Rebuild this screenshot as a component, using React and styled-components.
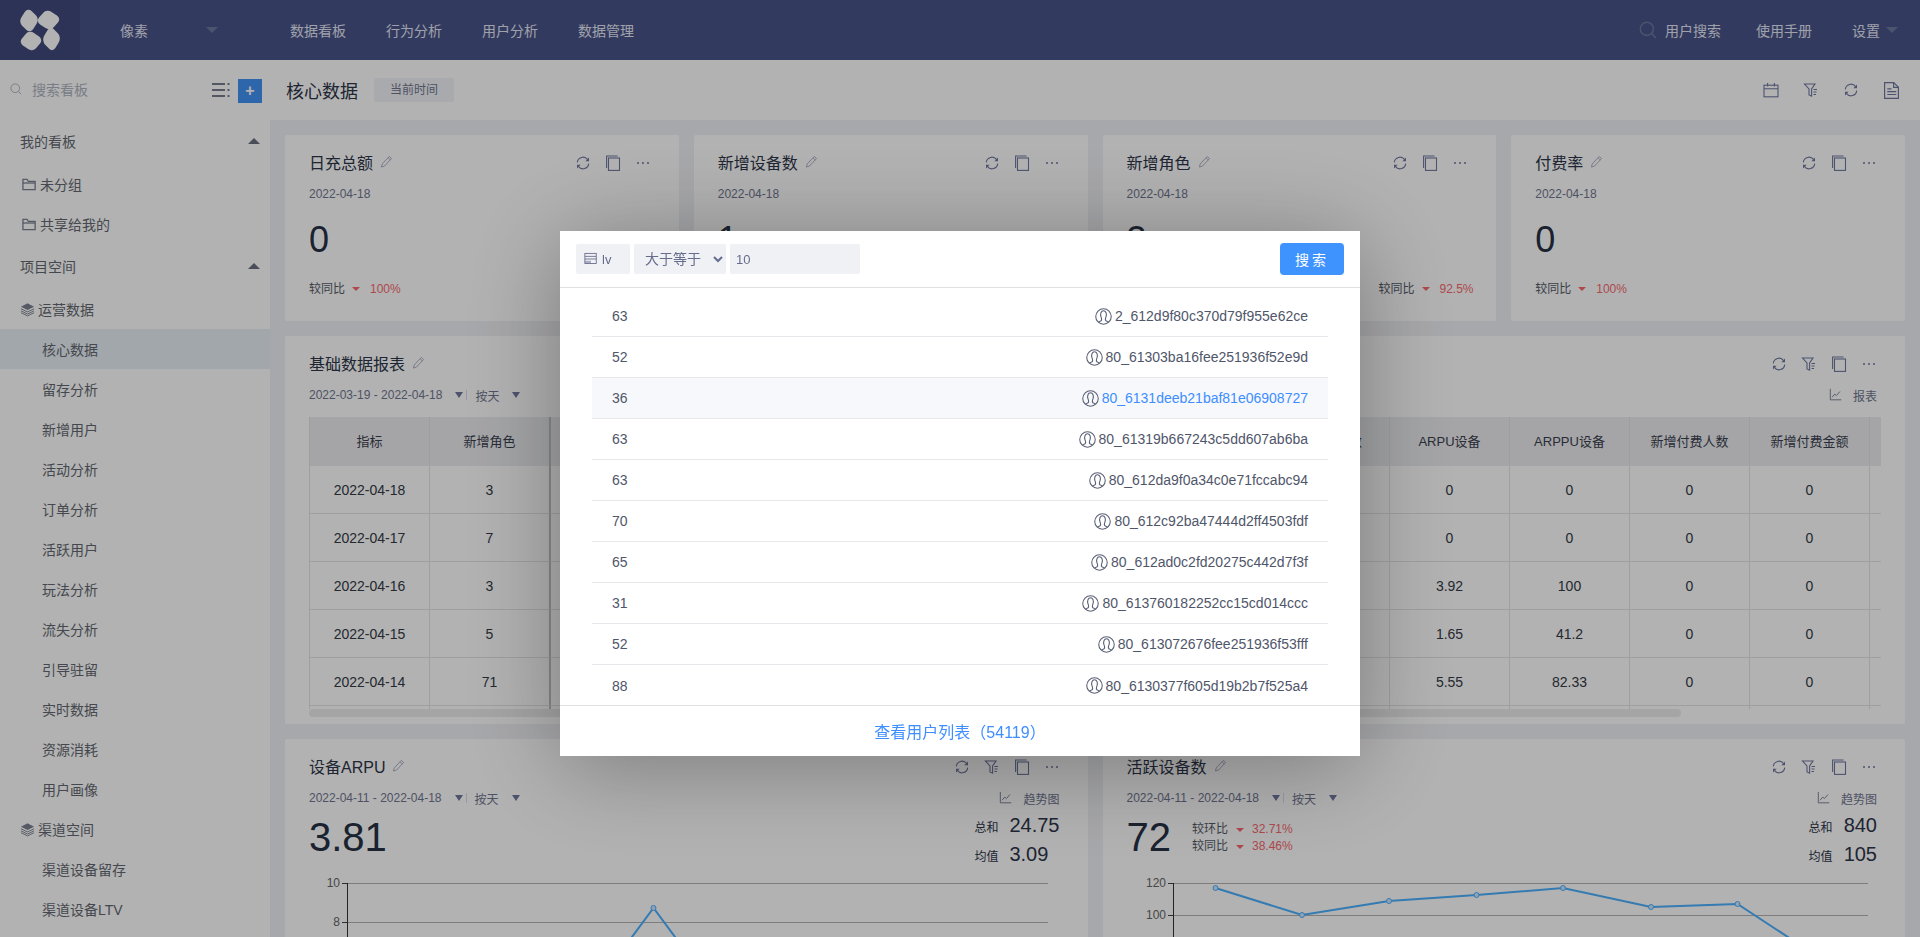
import React from 'react'
import styled, { createGlobalStyle } from 'styled-components'

const GlobalStyle = createGlobalStyle`
  * { box-sizing: border-box; }
  html, body { margin: 0; padding: 0; height: 100%; overflow: hidden; }
  body {
    font-family: "Liberation Sans", "Noto Sans CJK SC", sans-serif;
    font-size: 14px;
    color: #2d3549;
    background: #f0f1f5;
  }
`

const ICON = '#6f789f'

const Svg = ({ size = 16, children, ...rest }) => (
  <svg width={size} height={size} viewBox="0 0 16 16" fill="none" stroke="currentColor" strokeWidth="1.1" {...rest}>
    {children}
  </svg>
)
const IconRefresh = () => (
  <Svg>
    <path d="M2.3 7.4A5.7 5.7 0 0 1 12.6 4.6" />
    <path d="M13.7 8.6A5.7 5.7 0 0 1 3.4 11.4" />
    <path d="M14 2.6v3.600h-3.600z" fill="currentColor" stroke="none" />
    <path d="M2 13.400V9.800h3.600z" fill="currentColor" stroke="none" />
  </Svg>
)
const IconCopy = () => (
  <Svg>
    <rect x="3.500" y="3" width="11" height="12.400" />
    <path d="M1.600 13V1h11" />
  </Svg>
)
const IconDots = () => (
  <Svg>
    <circle cx="3" cy="8" r="1" fill="currentColor" stroke="none" />
    <circle cx="8" cy="8" r="1" fill="currentColor" stroke="none" />
    <circle cx="13" cy="8" r="1" fill="currentColor" stroke="none" />
  </Svg>
)
const IconFilter = () => (
  <Svg>
    <path d="M1.500 2h10.500L8.600 7v7.200L6 13V7z" />
    <path d="M10.500 7.500h3.500M10.500 10h3M10.500 12.500h2.500" />
  </Svg>
)
const IconCalendar = () => (
  <Svg>
    <rect x="1" y="3.200" width="14" height="11.600" />
    <path d="M1 6.800h14M4.600 1v3.600M11.400 1v3.600" />
  </Svg>
)
const IconDoc = () => (
  <Svg size={17}>
    <path d="M1.500.6h8.600l4.400 4.400v10.400h-13z" />
    <path d="M4 6.400h4M4 9h8.500M4 11.800h8.500M10 .6v4.400h4.500" />
  </Svg>
)
const IconPencil = () => (
  <Svg size={14} strokeWidth="1">
    <path d="M10.600 1.600l2.600 2.400-8 8.600-3.600 1.200 1-3.600z" />
    <path d="M9.200 3.200l2.600 2.400" />
  </Svg>
)
const IconChart = () => (
  <Svg size={14} strokeWidth="1">
    <path d="M1.500 1v12.500H14" />
    <path d="M3.500 10.500l3-3.500 2 1.600 4-4.600" />
  </Svg>
)
const IconFolder = () => (
  <Svg size={15} strokeWidth="1.400">
    <path d="M1 13.500V2.600h4.400l1.400 2H14v8.900z" />
    <path d="M1 6.400h13" />
  </Svg>
)
const IconLayers = () => (
  <Svg size={15} strokeWidth="1">
    <path d="M8 1.400L15 5 8 8.600 1 5z" fill="currentColor" stroke="none" />
    <path d="M1 7.200L8 10.600l7-3.400M1 9.400L8 12.800l7-3.400M1 11.400L8 14.800l7-3.400" />
  </Svg>
)
const IconUser = () => (
  <Svg size={17} strokeWidth="1" style={{ flexShrink: 0 }}>
    <circle cx="8" cy="8" r="7.300" />
    <path d="M5.800 12c.9-.9.500-2.200-.2-3.900C4.800 5.700 5.600 2.600 8 2.600s3.200 3.100 2.400 5.500c-.7 1.700-1.100 3-.2 3.900" />
    <path d="M3 13.300l2.800-1.300M13 13.300L10.200 12" />
  </Svg>
)
const IconSearch = ({ size = 16 }) => (
  <Svg size={size} strokeWidth="1.300">
    <circle cx="7" cy="7" r="5.800" />
    <path d="M11.200 11.200l3.800 3.800" />
  </Svg>
)
const IconField = () => (
  <Svg size={14} strokeWidth="1">
    <rect x="1" y="1.600" width="13" height="11.600" />
    <path d="M1 5h13M1 8h13" />
    <path d="M1 10h7v3.200H1z" fill="currentColor" stroke="none" opacity="0.5" />
  </Svg>
)
const IconMenu = () => (
  <svg width="18" height="14" viewBox="0 0 18 14" fill="currentColor">
    <rect x="0" y="0" width="13" height="2" />
    <rect x="0" y="6" width="13" height="2" />
    <rect x="0" y="12" width="13" height="2" />
    <rect x="15.500" y="0" width="2" height="2" />
    <rect x="15.500" y="6" width="2" height="2" />
    <rect x="15.500" y="12" width="2" height="2" />
  </svg>
)
const logoPetals = [
  'translate(10 11.500) scale(.8 .98) rotate(38)',
  'translate(29.500 11) scale(.98 .84) rotate(38)',
  'translate(12 32) scale(.94 .84) rotate(38)',
  'translate(32.500 30) scale(.76 1.02) rotate(38)',
]
const Logo = () => (
  <svg width="42" height="42" viewBox="0 0 42 42" fill="#fff">
    {logoPetals.map(t => <rect key={t} x="-9.500" y="-9.500" width="19" height="19" rx="6" transform={t} />)}
  </svg>
)

const Page = styled.div`
  height: 100vh;
  display: flex;
  flex-direction: column;
  overflow: hidden;
`
const TopBar = styled.header`
  height: 60px;
  flex-shrink: 0;
  display: flex;
  align-items: center;
  background: #495388;
  color: #e4e7f5;
  padding-right: 22px;
`
const LogoBlock = styled.div`
  width: 80px;
  height: 60px;
  background: #404a7c;
  display: flex;
  align-items: center;
  justify-content: center;
`
const Project = styled.div`
  width: 170px;
  margin-left: 40px;
  display: flex;
  align-items: center;
`
const NavList = styled.nav`
  display: flex;
  gap: 40px;
`
const TopRight = styled.div`
  margin-left: auto;
  display: flex;
  align-items: center;
`
const TopSearch = styled.div`
  display: flex;
  align-items: center;
  gap: 8px;
  margin-right: 35px;
  svg { color: #6e78a0; }
`
const TopLink = styled.span`
  margin-right: ${p => p.$gap || 0}px;
`
const Caret = styled.i`
  display: inline-block;
  width: 0;
  height: 0;
  flex-shrink: 0;
  margin-left: ${p => p.$left || 0}px;
  margin-right: ${p => p.$right || 0}px;
  border-left: ${p => p.$size}px solid transparent;
  border-right: ${p => p.$size}px solid transparent;
  ${p => p.$up
    ? `border-bottom: ${p.$height}px solid ${p.$color};`
    : `border-top: ${p.$height}px solid ${p.$color};`}
`
const Body = styled.div`
  flex: 1;
  min-height: 0;
  display: flex;
`
const Sidebar = styled.aside`
  width: 270px;
  flex-shrink: 0;
  background: #fff;
  overflow: hidden;
  color: #636870;
`
const SideSearch = styled.div`
  height: 59px;
  display: flex;
  align-items: center;
  padding: 0 8px 2px 10px;
  color: #aeb3c0;
`
const SideSearchText = styled.span`
  margin-left: 10px;
  flex: 1;
`
const MenuBtn = styled.span`
  display: flex;
  color: #777d8f;
  margin: 2px 8px 0 0;
`
const PlusBtn = styled.button`
  width: 24px;
  height: 24px;
  margin-top: 4px;
  border: 0;
  padding: 0;
  background: #4392f5;
  color: #fff;
  font: bold 16px/24px "Liberation Sans", sans-serif;
`
const SideSection = styled.div`
  height: 40px;
  margin-top: 2px;
  padding: 0 10px 0 20px;
  display: flex;
  align-items: center;
  justify-content: space-between;
`
const SideGroup = styled.div`
  padding-top: 3px;
`
const SideRow = styled.div`
  height: 40px;
  padding-left: ${p => p.$indent}px;
  display: flex;
  align-items: center;
  gap: 3px;
  background: ${p => (p.$active ? '#e9f0f6' : 'transparent')};
  svg { color: #7c8290; }
`
const Main = styled.main`
  flex: 1;
  min-width: 0;
  display: flex;
  flex-direction: column;
`
const Toolbar = styled.div`
  height: 60px;
  flex-shrink: 0;
  background: #fff;
  display: flex;
  align-items: center;
  padding: 0 20px 0 16px;
`
const PageTitle = styled.h1`
  margin: 0;
  font-size: 18px;
  font-weight: 400;
  color: #2d3549;
`
const TimeTag = styled.span`
  width: 80px;
  height: 24px;
  margin-left: 16px;
  background: #f3f4f8;
  border-radius: 2px;
  font-size: 12px;
  line-height: 24px;
  text-align: center;
  color: #6f7690;
`
const ToolIcons = styled.div`
  margin-left: auto;
  display: flex;
  align-items: center;
  gap: 24px;
  color: ${ICON};
`
const Content = styled.div`
  flex: 1;
  min-height: 0;
  overflow: hidden;
  padding: 15px;
  display: flex;
  flex-direction: column;
  gap: 15px;
`
const Grid = styled.div`
  display: grid;
  grid-template-columns: repeat(${p => p.$cols}, minmax(0, 1fr));
  gap: 15px;
  flex-shrink: 0;
`
const Card = styled.section`
  background: #fff;
  border-radius: 2px;
  padding: 16px 24px 0;
  flex-shrink: 0;
  height: ${p => p.$h}px;
`
const CardHead = styled.div`
  height: 24px;
  display: flex;
  align-items: center;
  justify-content: space-between;
`
const CardTitle = styled.div`
  display: flex;
  align-items: center;
  gap: 7px;
  padding-bottom: 3px;
  font-size: 16px;
  color: #2d3549;
  svg { color: #a3a6bd; }
`
const CardIcons = styled.div`
  display: flex;
  gap: 14px;
  margin-right: 4px;
  color: ${ICON};
`
const DateText = styled.div`
  margin-top: 11px;
  font-size: 12px;
  line-height: 16px;
  color: #6f7690;
`
const BigValue = styled.div`
  margin-top: 16px;
  font-size: 36px;
  line-height: 44px;
  color: #263044;
`
const Compare = styled.div`
  margin-top: 19px;
  padding-left: ${p => p.$indent || 0}px;
  display: flex;
  align-items: center;
  white-space: nowrap;
  font-size: 12px;
  line-height: 16px;
  color: #555b68;
`
const Percent = styled.span`
  color: #f8696f;
`
const RangeRow = styled.div`
  margin-top: 11px;
  height: 16px;
  display: flex;
  align-items: center;
  justify-content: space-between;
  font-size: 12px;
  color: #6f7690;
`
const RangeLeft = styled.div`
  display: flex;
  align-items: center;
`
const RangeSep = styled.i`
  width: 1px;
  height: 10px;
  background: #dcdde4;
  margin: 0 8px 0 3px;
`
const ChartLink = styled.div`
  display: flex;
  align-items: center;
  gap: 10px;
  margin-right: 4px;
  color: #6f7690;
`
const TableBox = styled.div`
  margin-top: 14px;
  height: 292px;
  overflow: hidden;
`
const Table = styled.table`
  table-layout: fixed;
  width: 1680px;
  border-collapse: separate;
  border-spacing: 0;
`
const Th = styled.th`
  width: 120px;
  height: 49px;
  padding: 0 0 2px;
  font-size: 13px;
  font-weight: 400;
  color: #3a404e;
  background: #ecedf0;
  border-left: ${p => (p.$edge ? '2px solid #c4c4c4' : '1px solid #e2e3e7')};
`
const Td = styled.td`
  height: 48px;
  padding: 0;
  text-align: center;
  font-size: 14px;
  color: #343a46;
  border-left: ${p => (p.$edge ? '2px solid #c4c4c4' : '1px solid #e4e4e4')};
  border-bottom: 1px solid #e4e4e4;
`
const ScrollThumb = styled.div`
  width: 1372px;
  height: 8px;
  border-radius: 4px;
  background: #ececec;
`
const StatsRow = styled.div`
  margin-top: 6px;
  height: 53px;
  display: flex;
  justify-content: space-between;
  margin-right: 4px;
`
const StatsLeft = styled.div`
  display: flex;
  align-items: center;
  height: 50px;
  gap: 21px;
`
const TrendValue = styled.div`
  font-size: 40px;
  line-height: 50px;
  color: #263044;
`
const TrendCompare = styled.div`
  display: grid;
  grid-template-columns: auto auto auto;
  align-items: center;
  margin-top: 2px;
  font-size: 12px;
  line-height: 17px;
  color: #555b68;
`
const Summary = styled.div`
  display: grid;
  grid-template-columns: auto auto;
  column-gap: 11px;
  align-items: baseline;
  align-content: start;
  justify-content: end;
  font-size: 20px;
  line-height: 26px;
  color: #2d3549;
`
const SummaryLabel = styled.span`
  font-size: 12px;
`
const ChartSvg = styled.svg`
  display: block;
  margin-top: 10px;
  overflow: hidden;
`
const Overlay = styled.div`
  position: fixed;
  inset: 0;
  background: rgba(0, 0, 0, 0.3);
  display: flex;
  justify-content: center;
  align-items: flex-start;
  padding-top: 231px;
`
const Modal = styled.div`
  width: 800px;
  height: 525px;
  background: #fff;
  display: flex;
  flex-direction: column;
  box-shadow: 0 10px 90px rgba(0, 0, 0, 0.32);
`
const ModalHead = styled.div`
  height: 57px;
  flex-shrink: 0;
  padding: 13px 16px 0;
  display: flex;
  align-items: flex-start;
  gap: 4px;
  border-bottom: 1px solid #e0e0e3;
`
const FieldTag = styled.div`
  width: 54px;
  height: 30px;
  background: #f0f1f5;
  border-radius: 2px;
  padding-left: 8px;
  display: flex;
  align-items: center;
  gap: 4px;
  font-size: 13px;
  color: #666d8c;
`
const OpSelect = styled.select`
  width: 92px;
  height: 30px;
  border: 0;
  border-radius: 2px;
  background: #f0f1f5;
  padding-left: 7px;
  font: 14px "Liberation Sans", "Noto Sans CJK SC", sans-serif;
  color: #666d8c;
  outline: none;
`
const ValueInput = styled.input`
  width: 130px;
  height: 30px;
  border: 0;
  border-radius: 2px;
  background: #f0f1f5;
  padding: 0 6px;
  font: 13px "Liberation Sans", sans-serif;
  color: #666d8c;
  outline: none;
`
const SearchBtn = styled.button`
  width: 64px;
  height: 32px;
  margin: -1px 0 0 auto;
  border: 0;
  border-radius: 4px;
  background: #3e93ff;
  color: #fff;
  font: 14px "Liberation Sans", "Noto Sans CJK SC", sans-serif;
  letter-spacing: 3px;
`
const UserList = styled.div`
  flex: 1;
  min-height: 0;
  padding: 8px 32px 0;
  overflow: hidden;
`
const UserRow = styled.div`
  height: 41px;
  padding: 0 20px;
  display: flex;
  align-items: center;
  justify-content: space-between;
  font-size: 14px;
  color: #50566a;
  background: ${p => (p.$hover ? '#f7f8fb' : '#fff')};
  border-bottom: ${p => (p.$last ? '0' : '1px solid #e8e8ec')};
`
const UserId = styled.div`
  display: flex;
  align-items: center;
  gap: 3px;
  svg { color: #5a6076; }
  span { color: ${p => (p.$hover ? '#3e8eff' : '#50566a')}; }
`
const ModalFoot = styled.div`
  height: 51px;
  flex-shrink: 0;
  border-top: 1px solid #e0e0e3;
  display: flex;
  align-items: center;
  justify-content: center;
  font-size: 16px;
  color: #3e8eff;
`

const kanban = ['核心数据', '留存分析', '新增用户', '活动分析', '订单分析', '活跃用户', '玩法分析', '流失分析', '引导驻留', '实时数据', '资源消耗', '用户画像']
const statCards = [
  { title: '日充总额', value: '0', percent: '100%' },
  { title: '新增设备数', value: '1', percent: '' },
  { title: '新增角色', value: '3', percent: '92.5%', indent: 252 },
  { title: '付费率', value: '0', percent: '100%' },
]
const columns = ['指标', '新增角色', '', '', '', '', '', '', '付费设备数', 'ARPU设备', 'ARPPU设备', '新增付费人数', '新增付费金额', '']
const tableRows = [
  ['2022-04-18', '3', 0, 0, 0, 0],
  ['2022-04-17', '7', 0, 0, 0, 0],
  ['2022-04-16', '3', '3.92', 100, 0, 0],
  ['2022-04-15', '5', '1.65', '41.2', 0, 0],
  ['2022-04-14', '71', '5.55', '82.33', 0, 0],
  ['', '', '', '', '', ''],
]
const users = [
  ['63', '2_612d9f80c370d79f955e62ce'],
  ['52', '80_61303ba16fee251936f52e9d'],
  ['36', '80_6131deeb21baf81e06908727'],
  ['63', '80_61319b667243c5dd607ab6ba'],
  ['63', '80_612da9f0a34c0e71fccabc94'],
  ['70', '80_612c92ba47444d2ff4503fdf'],
  ['65', '80_612ad0c2fd20275c442d7f3f'],
  ['31', '80_613760182252cc15cd014ccc'],
  ['52', '80_613072676fee251936f53fff'],
  ['88', '80_6130377f605d19b2b7f525a4'],
]

function TrendChart({ axisX, gridEnd, ticks, points }) {
  const line = points.map(p => p.join(',')).join(' ')
  return (
    <ChartSvg width="755" height="200" viewBox="0 0 755 200">
      {ticks.map(t => (
        <g key={t.label}>
          <line x1={axisX} y1={t.y + 0.5} x2={gridEnd} y2={t.y + 0.5} stroke="#b4b4b4" />
          <line x1={axisX - 5} y1={t.y + 0.5} x2={axisX} y2={t.y + 0.5} stroke="#444" />
          <text x={axisX - 7} y={t.y + 4} textAnchor="end" fontSize="12" fill="#666">{t.label}</text>
        </g>
      ))}
      <line x1={axisX + 0.5} y1={ticks[0].y} x2={axisX + 0.5} y2="200" stroke="#333" />
      <polyline points={line} fill="none" stroke="#4bb0ff" strokeWidth="2" />
      {points.map(p => (
        <circle key={p[0]} cx={p[0]} cy={p[1]} r="2.500" fill="#cfe8ff" stroke="#4bb0ff" />
      ))}
    </ChartSvg>
  )
}

function Actions({ filter }) {
  return (
    <CardIcons>
      <IconRefresh />
      {filter && <IconFilter />}
      <IconCopy />
      <IconDots />
    </CardIcons>
  )
}

function Range({ text, link }) {
  return (
    <RangeRow>
      <RangeLeft>
        {text}
        <Caret $size={4} $height={6} $color={ICON} $left={13} />
        <RangeSep />
        按天
        <Caret $size={4} $height={6} $color={ICON} $left={13} />
      </RangeLeft>
      <ChartLink><IconChart />{link}</ChartLink>
    </RangeRow>
  )
}

export default function App() {
  return (
    <>
      <GlobalStyle />
      <Page>
        <TopBar>
          <LogoBlock><Logo /></LogoBlock>
          <Project>
            像素
            <Caret $size={6} $height={6} $color="#6e78a0" $left={58} />
          </Project>
          <NavList>
            <span>数据看板</span>
            <span>行为分析</span>
            <span>用户分析</span>
            <span>数据管理</span>
          </NavList>
          <TopRight>
            <TopSearch><IconSearch size={18} />用户搜索</TopSearch>
            <TopLink $gap={40}>使用手册</TopLink>
            <TopLink>设置</TopLink>
            <Caret $size={6} $height={6} $color="#6e78a0" $left={6} />
          </TopRight>
        </TopBar>
        <Body>
          <Sidebar>
            <SideSearch>
              <IconSearch size={12} />
              <SideSearchText>搜索看板</SideSearchText>
              <MenuBtn><IconMenu /></MenuBtn>
              <PlusBtn>+</PlusBtn>
            </SideSearch>
            <SideSection>我的看板<Caret $up $size={6} $height={6} $color="#6b7080" /></SideSection>
            <SideGroup>
              <SideRow $indent={22}><IconFolder />未分组</SideRow>
              <SideRow $indent={22}><IconFolder />共享给我的</SideRow>
            </SideGroup>
            <SideSection>项目空间<Caret $up $size={6} $height={6} $color="#6b7080" /></SideSection>
            <SideGroup>
              <SideRow $indent={20}><IconLayers />运营数据</SideRow>
            </SideGroup>
            {kanban.map((name, i) => (
              <SideRow key={name} $indent={42} $active={i === 0}>{name}</SideRow>
            ))}
            <SideRow $indent={20}><IconLayers />渠道空间</SideRow>
            <SideRow $indent={42}>渠道设备留存</SideRow>
            <SideRow $indent={42}>渠道设备LTV</SideRow>
          </Sidebar>
          <Main>
            <Toolbar>
              <PageTitle>核心数据</PageTitle>
              <TimeTag>当前时间</TimeTag>
              <ToolIcons>
                <IconCalendar />
                <IconFilter />
                <IconRefresh />
                <IconDoc />
              </ToolIcons>
            </Toolbar>
            <Content>
              <Grid $cols={4}>
                {statCards.map(c => (
                  <Card key={c.title} $h={186}>
                    <CardHead>
                      <CardTitle>{c.title}<IconPencil /></CardTitle>
                      <Actions />
                    </CardHead>
                    <DateText>2022-04-18</DateText>
                    <BigValue>{c.value}</BigValue>
                    {c.percent && (
                      <Compare $indent={c.indent}>
                        较同比
                        <Caret $size={4} $height={4} $color="#f8696f" $left={7} $right={10} />
                        <Percent>{c.percent}</Percent>
                      </Compare>
                    )}
                  </Card>
                ))}
              </Grid>
              <Card $h={388}>
                <CardHead>
                  <CardTitle>基础数据报表<IconPencil /></CardTitle>
                  <Actions filter />
                </CardHead>
                <Range text="2022-03-19 - 2022-04-18" link="报表" />
                <TableBox>
                  <Table>
                    <thead>
                      <tr>
                        {columns.map((c, i) => <Th key={i} $edge={i === 2}>{c}</Th>)}
                      </tr>
                    </thead>
                    <tbody>
                      {tableRows.map((r, ri) => (
                        <tr key={ri}>
                          {columns.map((c, i) => {
                            let val = ''
                            if (i < 2) val = r[i]
                            if (i >= 9 && i <= 12) val = r[i - 7]
                            return <Td key={i} $edge={i === 2}>{val}</Td>
                          })}
                        </tr>
                      ))}
                    </tbody>
                  </Table>
                </TableBox>
                <ScrollThumb />
              </Card>
              <Grid $cols={2}>
                <Card $h={500}>
                  <CardHead>
                    <CardTitle>设备ARPU<IconPencil /></CardTitle>
                    <Actions filter />
                  </CardHead>
                  <Range text="2022-04-11 - 2022-04-18" link="趋势图" />
                  <StatsRow>
                    <StatsLeft><TrendValue>3.81</TrendValue></StatsLeft>
                    <Summary>
                      <SummaryLabel>总和</SummaryLabel><span>24.75</span>
                      <SummaryLabel>均值</SummaryLabel><span>3.09</span>
                    </Summary>
                  </StatsRow>
                  <TrendChart
                    axisX={38}
                    gridEnd={739}
                    ticks={[{ label: '10', y: 8 }, { label: '8', y: 47 }]}
                    points={[[257.5, 150], [344.5, 33], [431.5, 150]]}
                  />
                </Card>
                <Card $h={500}>
                  <CardHead>
                    <CardTitle>活跃设备数<IconPencil /></CardTitle>
                    <Actions filter />
                  </CardHead>
                  <Range text="2022-04-11 - 2022-04-18" link="趋势图" />
                  <StatsRow>
                    <StatsLeft>
                      <TrendValue>72</TrendValue>
                      <TrendCompare>
                        <span>较环比</span>
                        <Caret $size={4} $height={4} $color="#f8696f" $left={8} $right={8} />
                        <Percent>32.71%</Percent>
                        <span>较同比</span>
                        <Caret $size={4} $height={4} $color="#f8696f" $left={8} $right={8} />
                        <Percent>38.46%</Percent>
                      </TrendCompare>
                    </StatsLeft>
                    <Summary>
                      <SummaryLabel>总和</SummaryLabel><span>840</span>
                      <SummaryLabel>均值</SummaryLabel><span>105</span>
                    </Summary>
                  </StatsRow>
                  <TrendChart
                    axisX={46}
                    gridEnd={741}
                    ticks={[{ label: '120', y: 8 }, { label: '100', y: 40 }]}
                    points={[[88.5, 13], [175, 40], [262, 26], [349.5, 20], [436, 13], [524, 32], [610.5, 29], [697.5, 86]]}
                  />
                </Card>
              </Grid>
            </Content>
          </Main>
        </Body>
        <Overlay>
          <Modal>
            <ModalHead>
              <FieldTag><IconField />lv</FieldTag>
              <OpSelect defaultValue="gte">
                <option value="gte">大于等于</option>
                <option value="lte">小于等于</option>
              </OpSelect>
              <ValueInput defaultValue="10" />
              <SearchBtn>搜索</SearchBtn>
            </ModalHead>
            <UserList>
              {users.map(([lv, id], i) => (
                <UserRow key={id} $hover={i === 2} $last={i === users.length - 1}>
                  <span>{lv}</span>
                  <UserId $hover={i === 2}><IconUser /><span>{id}</span></UserId>
                </UserRow>
              ))}
            </UserList>
            <ModalFoot>查看用户列表（54119）</ModalFoot>
          </Modal>
        </Overlay>
      </Page>
    </>
  )
}
